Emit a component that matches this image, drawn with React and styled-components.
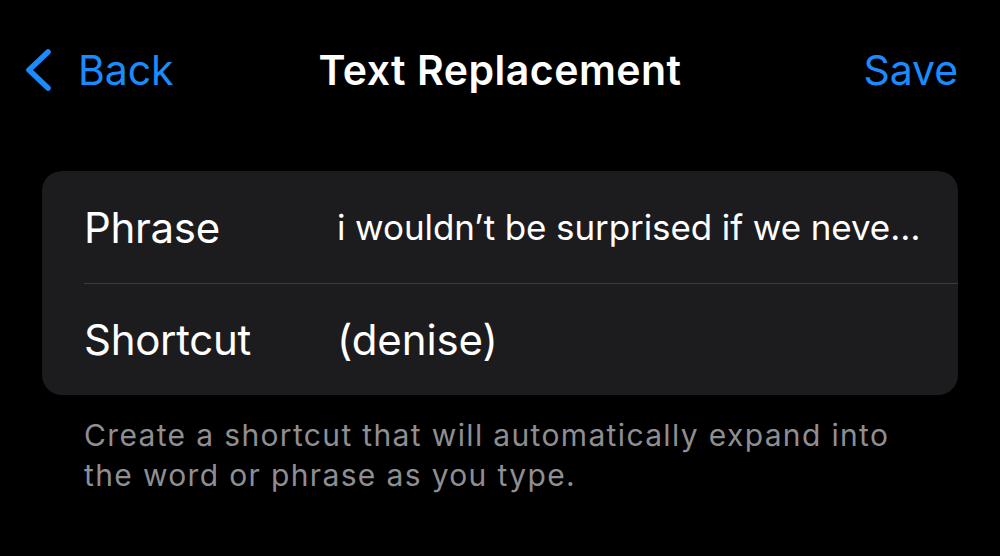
import React from "react"
import styled, { createGlobalStyle } from "styled-components"

const GlobalStyle = createGlobalStyle`
  html, body {
    margin: 0;
    padding: 0;
    background: #000;
  }
  body {
    font-family: Inter, "Noto Sans", "Liberation Sans", sans-serif;
    -webkit-font-smoothing: antialiased;
  }
`

const Screen = styled.div`
  width: 1000px;
  height: 556px;
  background: #000;
  color: #fff;
  overflow: hidden;
`

const NavBar = styled.div`
  display: grid;
  grid-template-columns: 1fr auto 1fr;
  align-items: center;
  height: 60px;
  padding: 40px 24px 0;
`

const NavButton = styled.button`
  display: flex;
  align-items: center;
  gap: 26px;
  justify-self: ${p => p.$align || "start"};
  margin-right: ${p => (p.$align === "end" ? "18px" : "0")};
  background: none;
  border: none;
  padding: 0;
  color: #1a8cff;
  font-family: inherit;
  font-size: 41px;
  letter-spacing: -0.1px;
`

const Title = styled.div`
  font-size: 41px;
  font-weight: 600;
  letter-spacing: 0.5px;
`

const Card = styled.div`
  margin: 71px 42px 0;
  background: #1c1c1e;
  border-radius: 20px;
  overflow: hidden;
`

const Row = styled.div`
  display: flex;
  align-items: center;
  height: 112px;
  margin-left: 42px;
  padding-right: 36px;
  border-top: ${p => (p.$first ? "none" : "1px solid #3a3a3c")};
  box-sizing: border-box;
`

const Label = styled.div`
  width: 253px;
  flex-shrink: 0;
  font-size: 42px;
  letter-spacing: -0.3px;
`

const Value = styled.div`
  flex: 1;
  min-width: 0;
  font-size: ${p => p.$size || 42}px;
  white-space: nowrap;
  overflow: hidden;
  text-overflow: ellipsis;
  letter-spacing: -0.1px;
`

const Footer = styled.p`
  margin: 20px 84px 0;
  font-size: 30px;
  line-height: 40px;
  letter-spacing: 1.35px;
  color: #8e8e93;
`

const Chevron = () => (
  <svg width="28" height="42" viewBox="0 0 28 42" fill="none">
    <path
      d="M24 3 L5 21 L24 39"
      stroke="#1a8cff"
      strokeWidth="5.5"
      strokeLinecap="round"
      strokeLinejoin="round"
    />
  </svg>
)

export default function App() {
  return (
    <Screen>
      <GlobalStyle />
      <NavBar>
        <NavButton>
          <Chevron />
          Back
        </NavButton>
        <Title>Text Replacement</Title>
        <NavButton $align="end">Save</NavButton>
      </NavBar>
      <Card>
        <Row $first>
          <Label>Phrase</Label>
          <Value $size={35}>i wouldn’t be surprised if we never see each other again</Value>
        </Row>
        <Row>
          <Label>Shortcut</Label>
          <Value>(denise)</Value>
        </Row>
      </Card>
      <Footer>
        Create a shortcut that will automatically expand into
        <br />
        the word or phrase as you type.
      </Footer>
    </Screen>
  )
}
